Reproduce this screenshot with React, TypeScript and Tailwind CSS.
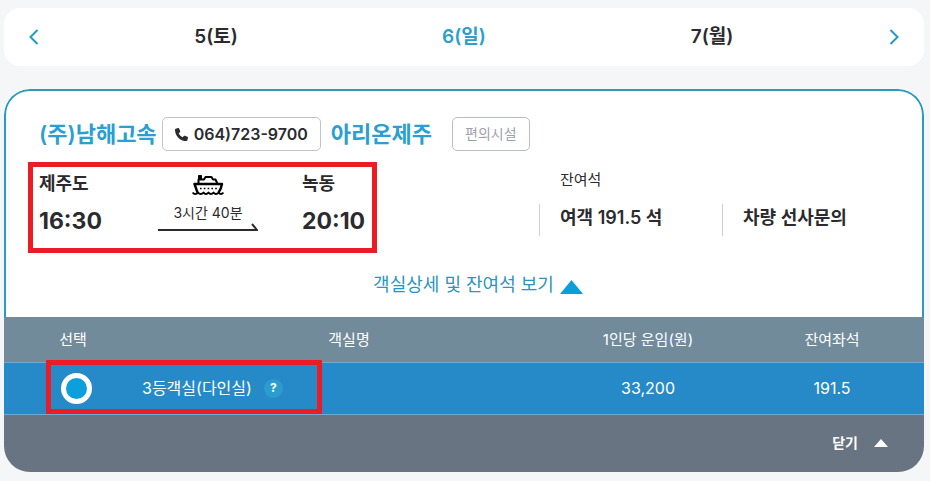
import { useState } from "react";
import { FaPhone } from "react-icons/fa6";

const DAYS = ["5(토)", "6(일)", "7(월)"];

const ROOMS = [{ id: "room3", name: "3등객실(다인실)", fare: "33,200", seats: "191.5" }];

function Chevron({ d }: { d: string }) {
  return (
    <svg width="10" height="16" fill="none" stroke="currentColor" strokeWidth="2" aria-hidden="true">
      <path d={d} />
    </svg>
  );
}

function ShipIcon() {
  return (
    <svg
      width="32"
      height="20"
      viewBox="0 0 32 20"
      fill="none"
      stroke="#000"
      strokeWidth="2"
      strokeLinejoin="round"
      aria-hidden="true"
    >
      <path d="M6.500 9V4.500H12L13.500 2H19.500L21 4.500H23.500L25.500 9" />
      <path d="M6.500 0.500H9.500V4.500H6.500Z" fill="#000" strokeWidth="1" />
      <path d="M5.500 17.500L2.500 9H30C29.500 12 28.500 15 26.500 17.500" strokeWidth="2.400" />
      <path d="M8 13.500H25" strokeDasharray="1.600 2.200" strokeWidth="1.600" />
      <path
        d="M0.500 17.500C2 19.500 4.500 19.500 6 17.500C7.500 19.500 10 19.500 11.500 17.500C13 19.500 15 19.500 16.500 17.500C18 19.500 20 19.500 21.500 17.500C23 19.500 25 19.500 26.500 17.500C28 19.500 30 19.500 31.500 17.500"
        strokeWidth="1.800"
      />
    </svg>
  );
}

function DateNav() {
  const [day, setDay] = useState(1);

  return (
    <nav className="flex h-[58px] items-stretch rounded-2xl bg-white text-[#1f9acb]">
      <button
        aria-label="이전 날짜"
        className="flex w-[60px] items-center justify-center"
        onClick={() => setDay(Math.max(0, day - 1))}
      >
        <Chevron d="M8.500 1L1.500 8L8.500 15" />
      </button>
      <div className="grid flex-1 grid-cols-3 px-7">
        {DAYS.map((label, i) => (
          <button
            key={label}
            onClick={() => setDay(i)}
            className={
              i === day
                ? "text-[19px] leading-6 font-semibold text-[#2a9fd0]"
                : "text-[19px] leading-6 font-semibold text-[#2b2b2f]"
            }
          >
            {label}
          </button>
        ))}
      </div>
      <button
        aria-label="다음 날짜"
        className="flex w-[60px] items-center justify-center"
        onClick={() => setDay(Math.min(DAYS.length - 1, day + 1))}
      >
        <Chevron d="M1.500 1L8.500 8L1.500 15" />
      </button>
    </nav>
  );
}

function Stop({ port, time }: { port: string; time: string }) {
  return (
    <div className="pt-px">
      <p className="text-[18px] leading-8 font-semibold">{port}</p>
      <p className="text-[23px] leading-[42px] font-bold">{time}</p>
    </div>
  );
}

function Route() {
  return (
    <div className="grid h-[91px] w-[349px] grid-cols-[75px_1fr_70px] border-5 border-[#ed1c24] pl-[6px]">
      <Stop port="제주도" time="16:30" />
      <div className="flex flex-col items-center pt-2">
        <ShipIcon />
        <p className="mt-2 text-[14px] leading-5">3시간 40분</p>
        <svg width="100" height="8" fill="none" stroke="#2b2b2f" strokeWidth="2" aria-hidden="true">
          <path d="M0 7H99L94 1" />
        </svg>
      </div>
      <Stop port="녹동" time="20:10" />
    </div>
  );
}

function Seats() {
  return (
    <div>
      <p className="pt-1 pl-[21px] text-[15px] leading-7">잔여석</p>
      <div className="mt-[10px] grid grid-cols-[183px_1fr] text-[18px] leading-7 font-semibold">
        <p className="h-8 border-l border-[#cfcfcf] pl-5">여객 191.5 석</p>
        <p className="h-8 border-l border-[#cfcfcf] pl-5">차량 선사문의</p>
      </div>
    </div>
  );
}

function RoomTable() {
  const [selected, setSelected] = useState(ROOMS[0].id);

  return (
    <div className="relative">
      <table className="w-full table-fixed border-collapse text-center text-white">
        <thead>
          <tr className="h-[45px] bg-[#728b9b] text-[15px] leading-6">
            <th className="w-[15%] pt-[2px] font-normal">선택</th>
            <th className="w-[45%] pt-[2px] font-normal">객실명</th>
            <th className="w-1/5 pt-[2px] font-normal">1인당 운임(원)</th>
            <th className="w-1/5 pt-[2px] font-normal">잔여좌석</th>
          </tr>
        </thead>
        <tbody>
          {ROOMS.map((room) => (
            <tr
              key={room.id}
              className="h-[52px] border-y border-[#6fa9d4] bg-[#278ac8] text-[16px] leading-6"
            >
              <td className="pl-[6px]">
                <input
                  id={room.id}
                  type="radio"
                  name="room"
                  checked={selected === room.id}
                  onChange={() => setSelected(room.id)}
                  className="mx-auto block size-[31px] appearance-none rounded-full border-5 border-white bg-[#8fa5b2] checked:bg-[#0d9edc]"
                />
              </td>
              <td>
                <div className="flex items-center gap-3">
                  <label htmlFor={room.id}>{room.name}</label>
                  <button
                    aria-label="객실 안내"
                    className="flex size-[19px] items-center justify-center rounded-full bg-[#2a9dcc] text-[12px] leading-4 font-bold"
                  >
                    ?
                  </button>
                </div>
              </td>
              <td>{room.fare}</td>
              <td>{room.seats}</td>
            </tr>
          ))}
        </tbody>
      </table>
      <div className="pointer-events-none absolute top-[43px] left-[42px] h-[54px] w-[276px] border-5 border-[#ed1c24]" />
    </div>
  );
}

export default function App() {
  const [open, setOpen] = useState(true);

  return (
    <div className="min-h-screen bg-[#f4f6f8] py-2 pr-[6px] pl-1 font-['Inter','Noto_Sans_CJK_KR',sans-serif] text-[#2b2b2f]">
      <DateNav />

      <section className="mt-[23px] overflow-hidden rounded-[26px]">
        <div className="rounded-t-[26px] border-x-2 border-t-2 border-[#2a9bbd] bg-white px-[22px] pt-[26px] pb-5">
          <div className="flex items-center pl-[11px]">
            <h2 className="text-[22px] leading-8 font-semibold text-[#2a9fd0]">(주)남해고속</h2>
            <a
              href="tel:064-723-9700"
              className="ml-[5px] flex h-[34px] items-center gap-[6px] rounded-[5px] border border-[#c3c3c8] px-3 text-[16px] leading-6 font-semibold"
            >
              <FaPhone size={13} />
              064)723-9700
            </a>
            <h3 className="ml-[10px] text-[22px] leading-8 font-semibold text-[#2a9fd0]">아리온제주</h3>
            <button className="ml-5 h-[34px] rounded-[5px] border border-[#b9bcc4] px-3 text-[14px] leading-6 text-[#9da1ab]">
              편의시설
            </button>
          </div>

          <div className="mt-[11px] grid grid-cols-[511px_1fr]">
            <Route />
            <Seats />
          </div>

          <button
            onClick={() => setOpen(!open)}
            className="mx-auto mt-5 flex items-center gap-[6px] pl-7 text-[18px] leading-6 text-[#2a95c0]"
          >
            객실상세 및 잔여석 보기
            <svg width="23" height="14" className="mt-1" fill="#0d9ddb" aria-hidden="true">
              <path d="M11.500 0L23 14H0Z" />
            </svg>
          </button>
        </div>

        {open && (
          <>
            <RoomTable />
            <div className="flex h-[57px] justify-end bg-[#687482] pr-9">
              <button
                onClick={() => setOpen(false)}
                className="flex items-center gap-4 text-[14px] leading-6 font-semibold text-white"
              >
                닫기
                <svg width="14" height="8" fill="currentColor" aria-hidden="true">
                  <path d="M7 0L14 8H0Z" />
                </svg>
              </button>
            </div>
          </>
        )}
      </section>
    </div>
  );
}
